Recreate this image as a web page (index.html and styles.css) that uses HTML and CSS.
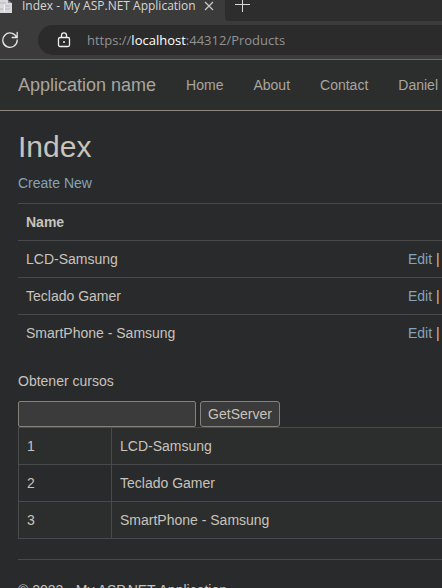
FILE: index.html
```html
<!DOCTYPE html>
<html lang="en">
<head>
<meta charset="utf-8">
<title>Index - My ASP.NET Application</title>
<link rel="stylesheet" href="styles.css">
</head>
<body>
<header class="browser">
  <div class="tabs">
    <div class="tab">
      <svg class="favicon" width="12" height="13" viewBox="0 0 12 13" aria-hidden="true">
        <path d="M0 0h8v3h4v10H0z" fill="#d9d9de"/>
        <path d="M8 0l4 3H8z" fill="#8d9096"/>
        <path d="M0 3h6M0 9h3M5 6h5M5 9h5" stroke="#b4b7be"/>
        <path d="M4.500 4v8" stroke="#f2f2f4"/>
      </svg>
      <span class="tab-title">Index - My ASP.NET Application</span>
      <button class="icon-button" type="button" aria-label="Close tab">
        <svg width="10" height="10" viewBox="0 0 10 10"><path d="M1 1l8 8M9 1L1 9" stroke="#c9c9c9" stroke-width="1.200"/></svg>
      </button>
    </div>
    <div class="tab-rest">
      <button class="icon-button" type="button" aria-label="New tab">
        <svg width="15" height="15" viewBox="0 0 15 15"><path d="M7.500 0v15M0 7.500h15" stroke="#d8d8d8"/></svg>
      </button>
    </div>
  </div>
  <div class="toolbar">
    <button class="icon-button reload" type="button" aria-label="Reload">
      <svg width="18" height="18" viewBox="0 0 18 18" fill="none" stroke="#e6e6e6" stroke-width="1.300" stroke-linecap="round"><path d="M15.600 6.300A7.200 7.200 0 1 0 16.200 9M16.200 1.500v5h-5"/></svg>
    </button>
    <div class="address">
      <svg width="14" height="18" viewBox="0 0 14 18" fill="none" stroke="#eeeeee" stroke-width="1.300" aria-hidden="true"><rect x="1.500" y="6.500" width="11" height="9" rx="1.500"/><path d="M4.500 6.500V4.300a2.500 2.500 0 0 1 5 0v2.200"/><circle cx="7" cy="11" r="1" fill="#eeeeee" stroke="none"/></svg>
      <span class="url">https://<span class="host">localhost</span>:44312/Products</span>
    </div>
  </div>
</header>
<nav class="navbar">
  <a class="brand" href="#">Application name</a>
  <a href="#">Home</a>
  <a href="#">About</a>
  <a href="#">Contact</a>
  <a href="#">Daniel</a>
</nav>
<main class="content">
  <h2>Index</h2>
  <p><a href="#">Create New</a></p>
  <table class="products">
    <thead><tr><th scope="col">Name</th><td></td></tr></thead>
    <tbody>
      <tr><td>LCD-Samsung</td><td class="actions"><a href="#">Edit</a> |</td></tr>
      <tr><td>Teclado Gamer</td><td class="actions"><a href="#">Edit</a> |</td></tr>
      <tr><td>SmartPhone - Samsung</td><td class="actions"><a href="#">Edit</a> |</td></tr>
    </tbody>
  </table>
  <p><label for="course">Obtener cursos</label></p>
  <form class="lookup">
    <input id="course" type="text">
    <button type="button">GetServer</button>
  </form>
  <table class="results">
    <tbody>
      <tr><td class="number">1</td><td>LCD-Samsung</td></tr>
      <tr><td class="number">2</td><td>Teclado Gamer</td></tr>
      <tr><td class="number">3</td><td>SmartPhone - Samsung</td></tr>
    </tbody>
  </table>
  <hr>
  <footer>© 2022 - My ASP.NET Application</footer>
</main>
</body>
</html>
```
FILE: styles.css
```css
* {
  box-sizing: border-box;
}

html,
body {
  height: 100%;
  margin: 0;
  overflow: hidden;
}

body {
  background: #292a2c;
  color: #c8c3bc;
  font: 14px/20px "Liberation Sans", Arial, sans-serif;
}

a {
  color: #85a3b8;
  text-decoration: none;
}

/* Browser bar */
.browser {
  height: 60px;
  border-bottom: 1px solid #6a6a6a;
  background: #3b3b3b;
  font-family: "Open Sans", "Noto Sans", sans-serif;
}

.tabs {
  display: flex;
  height: 21px;
}

.tab {
  display: flex;
  align-items: flex-start;
  width: 225px;
}

.tab-title {
  width: 182px;
  padding-left: 10px;
  color: #d6d6d6;
  font-size: 12px;
  line-height: 12px;
  white-space: nowrap;
}

.icon-button {
  display: flex;
  padding: 0;
  border: 0;
  background: none;
}

.tab .icon-button {
  padding-left: 10px;
}

.tab .icon-button svg {
  margin-top: 1px;
}

.tab-rest {
  flex: 1;
  padding-left: 10px;
  border-radius: 0 0 0 4px;
  background: #2d2d2d;
  overflow: hidden;
}

.tab-rest .icon-button {
  margin-top: -3px;
}

.toolbar {
  display: flex;
  align-items: center;
  padding-top: 4px;
}

.reload {
  width: 38px;
}

.reload svg {
  margin-left: 1px;
}

.address {
  display: flex;
  flex: 1;
  align-items: center;
  gap: 16px;
  height: 30px;
  padding-left: 19px;
  border-radius: 15px 0 0 15px;
  background: #2b2b2b;
}

.url {
  flex: 1;
  color: #929292;
  font-size: 13px;
  white-space: nowrap;
}

.address svg {
  flex: none;
}

.host {
  color: #ffffff;
}

/* Site navigation */
.navbar {
  display: flex;
  align-items: center;
  height: 51px;
  padding-left: 3px;
  border-bottom: 1px solid #8b867e;
  background: #2c2e2d;
}

.navbar a {
  padding: 0 15px;
  color: #aaa59d;
  white-space: nowrap;
}

.navbar .brand {
  font-size: 18px;
}

/* Page */
.content {
  padding-left: 18px;
}

h2 {
  margin: 19px 0 10px;
  font-size: 30px;
  font-weight: 400;
  line-height: 33px;
}

p {
  margin: 0 0 10px;
}

table {
  width: 100%;
  margin-bottom: 20px;
  border-spacing: 0;
}

th,
td {
  padding: 8px;
  border-top: 1px solid #484a4c;
  text-align: left;
}

.products td:last-child {
  width: 42px;
  padding-right: 0;
  white-space: nowrap;
}

.lookup {
  display: flex;
  gap: 4px;
}

.lookup input,
.lookup button {
  height: 26px;
  border: 1px solid #85817b;
  border-radius: 2px;
  background: #3b3b3b;
  color: #c8c3bc;
  font: inherit;
}

.lookup input {
  width: 178px;
}

.lookup button {
  width: 80px;
  padding: 0;
  border-radius: 3px;
}

.results {
  border-left: 1px solid #484a4c;
  border-bottom: 1px solid #484a4c;
}

.results .number {
  width: 93px;
  border-right: 1px solid #484a4c;
}

.results tr:nth-child(odd) {
  background: #2c2e2d;
}

hr {
  height: 1px;
  margin: 20px 0;
  border: 0;
  background: #484a4c;
}
```
